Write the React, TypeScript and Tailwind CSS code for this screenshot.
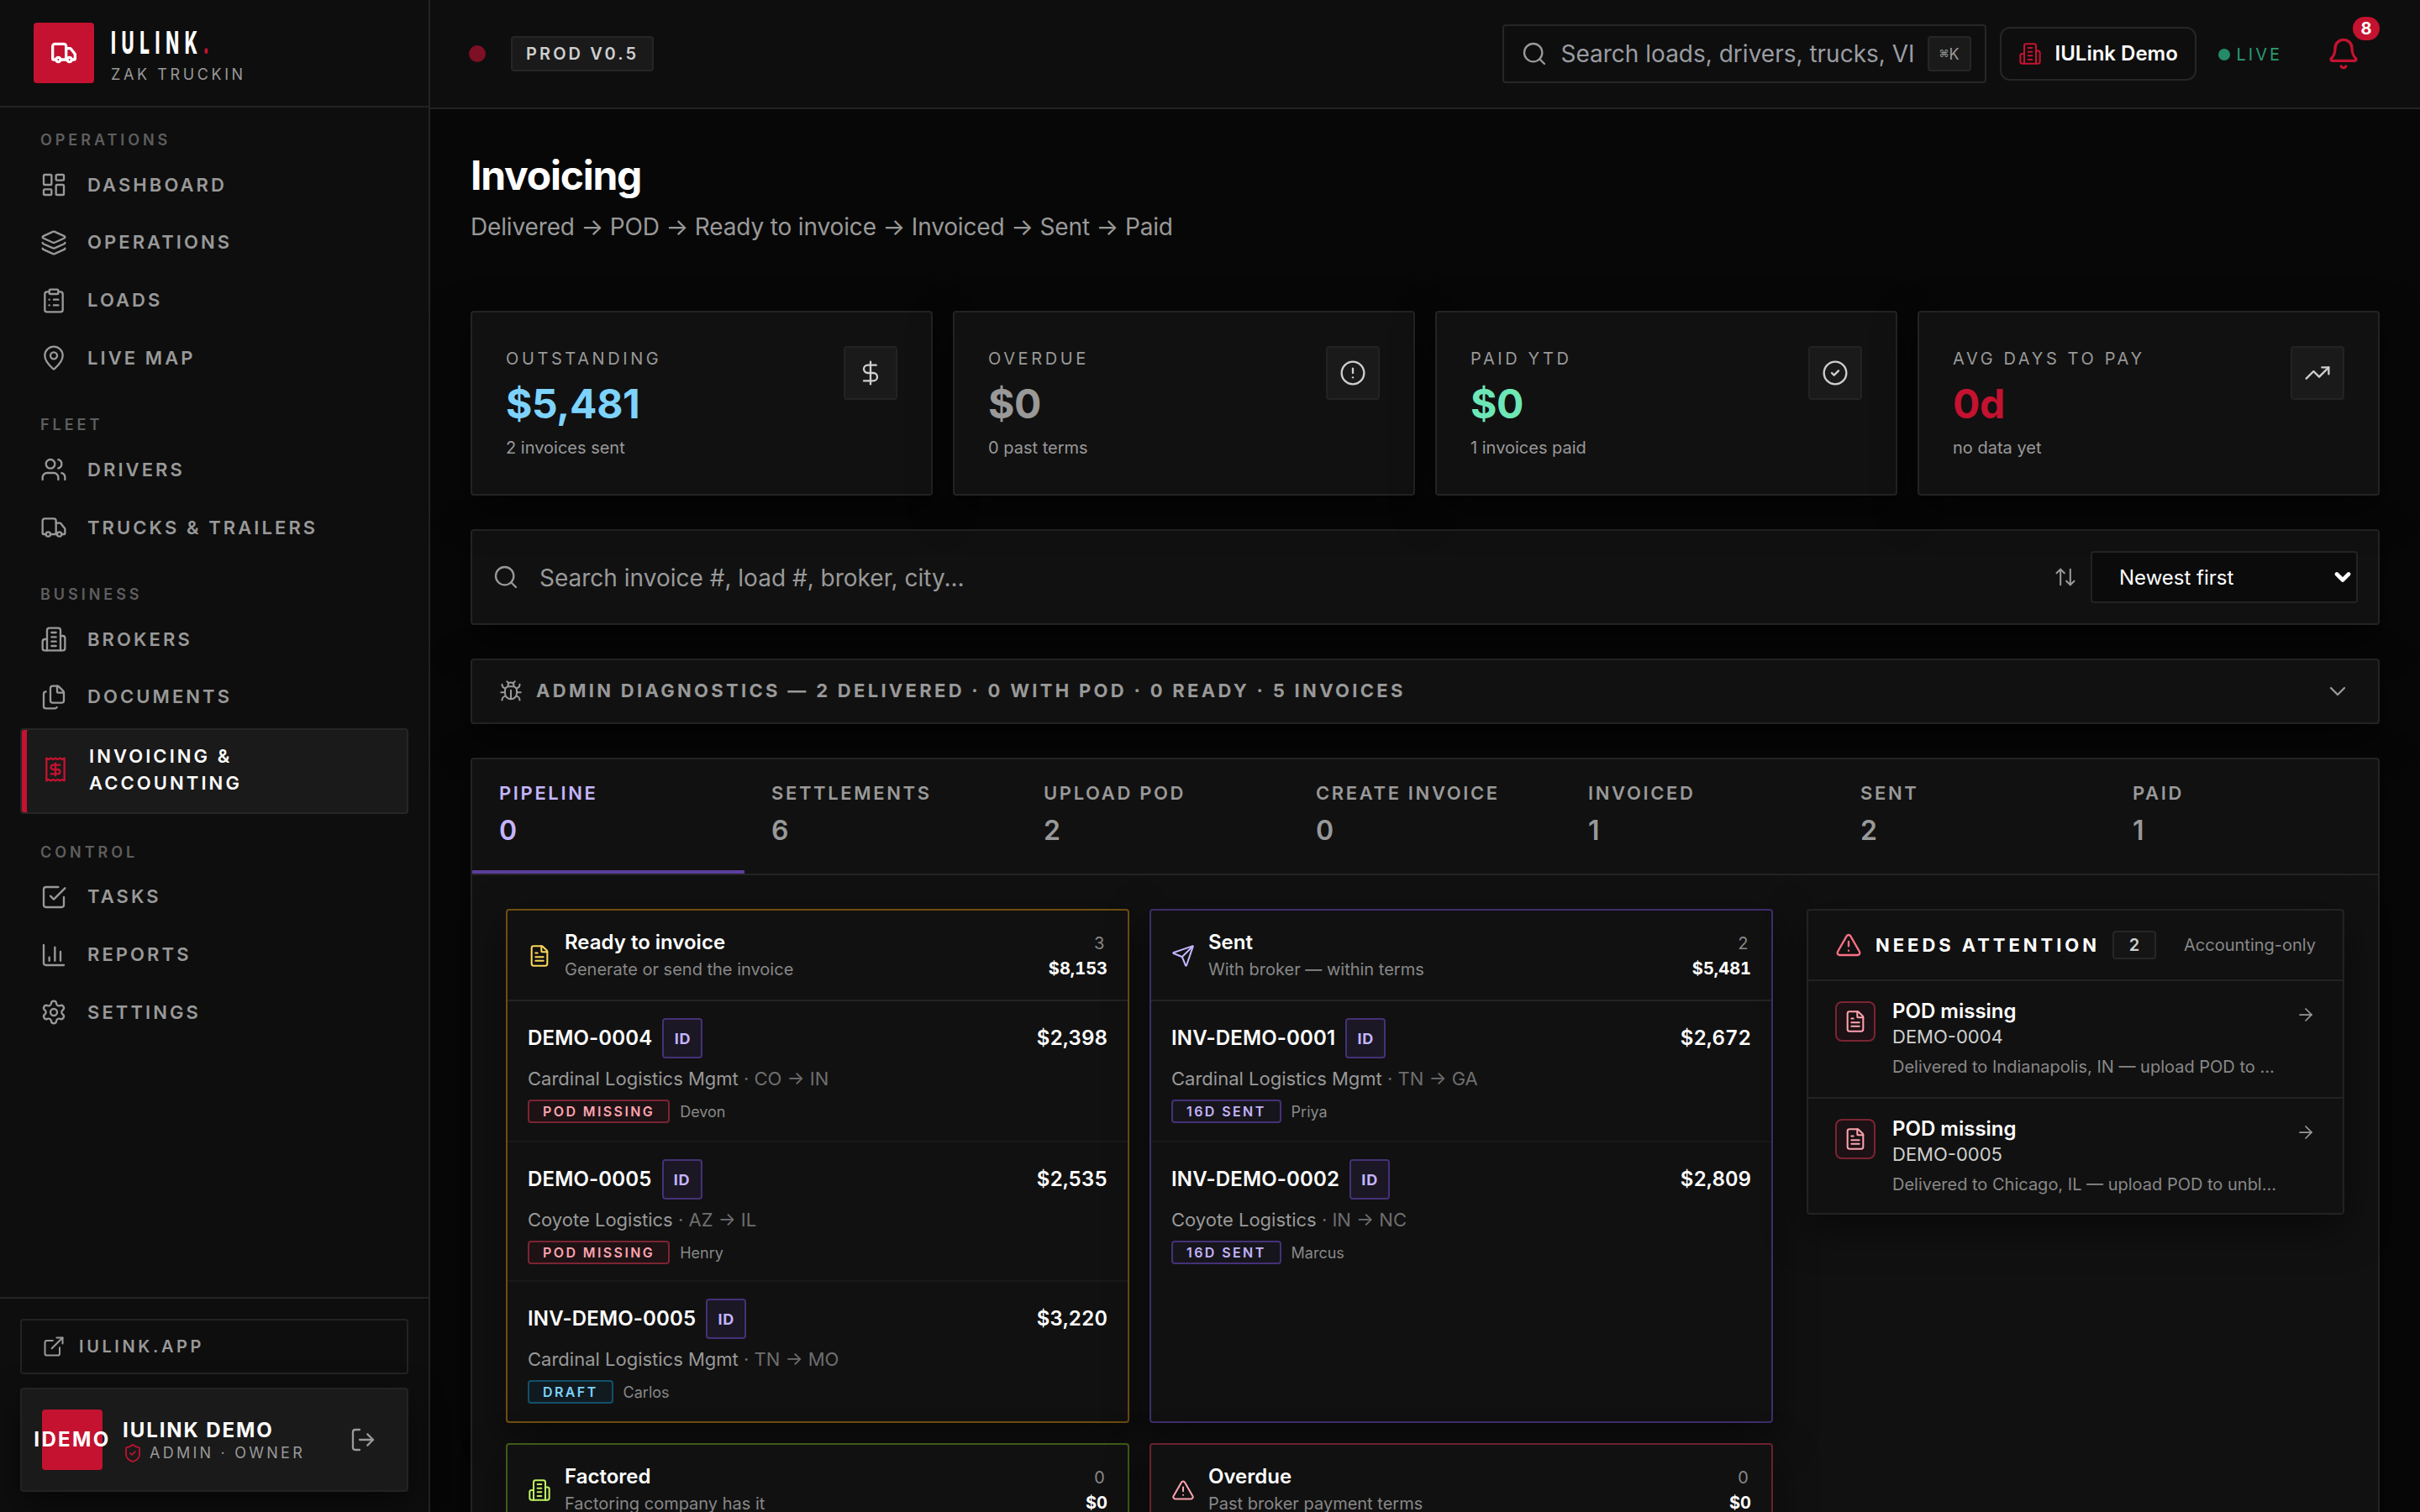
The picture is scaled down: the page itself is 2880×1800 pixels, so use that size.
import type { ReactNode } from 'react';
import {
  ArrowRight,
  ArrowUpDown,
  Bell,
  Bug,
  ChevronDown,
  CircleAlert,
  CircleCheck,
  ClipboardList,
  DollarSign,
  ExternalLink,
  FileText,
  Files,
  Layers,
  LayoutDashboard,
  LogOut,
  MapPin,
  Search,
  Send,
  Settings,
  ShieldCheck,
  TrendingUp,
  TriangleAlert,
  Truck,
  Users,
  type LucideIcon,
} from 'lucide-react';

type IconType = LucideIcon | ((props: { className?: string }) => ReactNode);

const stroke = {
  viewBox: '0 0 24 24',
  fill: 'none',
  stroke: 'currentColor',
  strokeWidth: 2,
  strokeLinecap: 'round' as const,
  strokeLinejoin: 'round' as const,
};

function BrokerIcon({ className }: { className?: string }) {
  return (
    <svg {...stroke} className={className}>
      <path d="M6 22V4a2 2 0 0 1 2-2h8a2 2 0 0 1 2 2v18Z" />
      <path d="M6 12H4a2 2 0 0 0-2 2v6a2 2 0 0 0 2 2h2" />
      <path d="M18 9h2a2 2 0 0 1 2 2v9a2 2 0 0 1-2 2h-2" />
      <path d="M10 6h4M10 10h4M10 14h4M10 18h4" />
    </svg>
  );
}

function TaskIcon({ className }: { className?: string }) {
  return (
    <svg {...stroke} className={className}>
      <path d="m9 11 3 3L22 4" />
      <path d="M21 12v7a2 2 0 0 1-2 2H5a2 2 0 0 1-2-2V5a2 2 0 0 1 2-2h11" />
    </svg>
  );
}

function ReportIcon({ className }: { className?: string }) {
  return (
    <svg {...stroke} className={className}>
      <path d="M3 3v16a2 2 0 0 0 2 2h16M8 17v-3M13 17V5M18 17V9" />
    </svg>
  );
}

function InvoiceIcon({ className }: { className?: string }) {
  return (
    <svg {...stroke} className={className}>
      <path d="M4 2v20l2-1 2 1 2-1 2 1 2-1 2 1 2-1 2 1V2l-2 1-2-1-2 1-2-1-2 1-2-1-2 1Z" />
      <path d="M16 8h-6a2 2 0 1 0 0 4h4a2 2 0 1 1 0 4H8M12 17.5v-11" />
    </svg>
  );
}

type NavItem = { label: string; icon: IconType; active?: boolean };

const nav: { title: string; items: NavItem[] }[] = [
  {
    title: 'Operations',
    items: [
      { label: 'Dashboard', icon: LayoutDashboard },
      { label: 'Operations', icon: Layers },
      { label: 'Loads', icon: ClipboardList },
      { label: 'Live Map', icon: MapPin },
    ],
  },
  {
    title: 'Fleet',
    items: [
      { label: 'Drivers', icon: Users },
      { label: 'Trucks & Trailers', icon: Truck },
    ],
  },
  {
    title: 'Business',
    items: [
      { label: 'Brokers', icon: BrokerIcon },
      { label: 'Documents', icon: Files },
      { label: 'Invoicing & Accounting', icon: InvoiceIcon, active: true },
    ],
  },
  {
    title: 'Control',
    items: [
      { label: 'Tasks', icon: TaskIcon },
      { label: 'Reports', icon: ReportIcon },
      { label: 'Settings', icon: Settings },
    ],
  },
];

const stats = [
  { label: 'Outstanding', value: '$5,481', note: '2 invoices sent', color: 'text-[#7dd3fc]', icon: DollarSign },
  { label: 'Overdue', value: '$0', note: '0 past terms', color: 'text-[#999999]', icon: CircleAlert },
  { label: 'Paid YTD', value: '$0', note: '1 invoices paid', color: 'text-[#6ee7b7]', icon: CircleCheck },
  { label: 'Avg days to pay', value: '0d', note: 'no data yet', color: 'text-[#c41230]', icon: TrendingUp },
];

const tabs = [
  { label: 'Pipeline', count: 0, active: true },
  { label: 'Settlements', count: 6 },
  { label: 'Upload POD', count: 2 },
  { label: 'Create invoice', count: 0 },
  { label: 'Invoiced', count: 1 },
  { label: 'Sent', count: 2 },
  { label: 'Paid', count: 1 },
];

const tones = {
  rose: 'border-[#7a2433] bg-[#1e1215] text-[#fda4af]',
  violet: 'border-[#443177] bg-[#17151c] text-[#c4b5fd]',
  sky: 'border-[#12506c] bg-[#111a1f] text-[#7dd3fc]',
};

type Row = { id: string; amount: string; broker: string; lane: string; badge: string; tone: keyof typeof tones; driver: string };

const columns: { title: string; note: string; count: number; total: string; border: string; color: string; icon: IconType; rows: Row[] }[] = [
  {
    title: 'Ready to invoice',
    note: 'Generate or send the invoice',
    count: 3,
    total: '$8,153',
    border: 'border-[#704d10]',
    color: 'text-[#fcd858]',
    icon: FileText,
    rows: [
      { id: 'DEMO-0004', amount: '$2,398', broker: 'Cardinal Logistics Mgmt', lane: 'CO → IN', badge: 'POD missing', tone: 'rose', driver: 'Devon' },
      { id: 'DEMO-0005', amount: '$2,535', broker: 'Coyote Logistics', lane: 'AZ → IL', badge: 'POD missing', tone: 'rose', driver: 'Henry' },
      { id: 'INV-DEMO-0005', amount: '$3,220', broker: 'Cardinal Logistics Mgmt', lane: 'TN → MO', badge: 'Draft', tone: 'sky', driver: 'Carlos' },
    ],
  },
  {
    title: 'Sent',
    note: 'With broker — within terms',
    count: 2,
    total: '$5,481',
    border: 'border-[#3d2d6b]',
    color: 'text-[#c4b5fd]',
    icon: Send,
    rows: [
      { id: 'INV-DEMO-0001', amount: '$2,672', broker: 'Cardinal Logistics Mgmt', lane: 'TN → GA', badge: '16d sent', tone: 'violet', driver: 'Priya' },
      { id: 'INV-DEMO-0002', amount: '$2,809', broker: 'Coyote Logistics', lane: 'IN → NC', badge: '16d sent', tone: 'violet', driver: 'Marcus' },
    ],
  },
  {
    title: 'Factored',
    note: 'Factoring company has it',
    count: 0,
    total: '$0',
    border: 'border-[#3f5a18]',
    color: 'text-[#bef264]',
    icon: BrokerIcon,
    rows: [],
  },
  {
    title: 'Overdue',
    note: 'Past broker payment terms',
    count: 0,
    total: '$0',
    border: 'border-[#6b212d]',
    color: 'text-[#fda4af]',
    icon: TriangleAlert,
    rows: [],
  },
];

const alerts = [
  { id: 'DEMO-0004', note: 'Delivered to Indianapolis, IN — upload POD to unblock' },
  { id: 'DEMO-0005', note: 'Delivered to Chicago, IL — upload POD to unblock' },
];

function Sidebar() {
  return (
    <aside className="flex w-[512px] shrink-0 flex-col border-r-2 border-[#232323] bg-[#0e0e0e]">
      <div className="flex h-[128px] items-center gap-5 border-b-2 border-[#232323] px-10">
        <div className="flex size-[72px] items-center justify-center rounded bg-[#c41230] text-white">
          <Truck className="size-8 stroke-[2.5]!" />
        </div>
        <div className="flex flex-col pt-[11px]">
          <div className="h-9 w-[130px]">
            <span className="inline-block origin-left scale-x-[0.56] text-[37px] leading-9 font-extrabold tracking-[0.32em] whitespace-nowrap text-white">
              IULINK<span className="text-[#c41230]">.</span>
            </span>
          </div>
          <div className="mt-1 text-[18px] leading-8 tracking-[0.2em] text-[#999999] uppercase">Zak Truckin</div>
        </div>
      </div>

      <nav className="flex grow flex-col px-6 pt-[25px]">
        {nav.map((group) => (
          <div key={group.title} className="mb-[34px] last:-mt-0.5">
            <div className="mb-[7px] h-7 px-6 text-[18px] leading-7 font-semibold tracking-[0.22em] text-[#5e5e5e] uppercase">
              {group.title}
            </div>
            <div className="flex flex-col gap-[4.8px]">
              {group.items.map(({ label, icon: Icon, active }) =>
                active ? (
                  <div
                    key={label}
                    className="flex h-[102px] items-center gap-6 rounded border-2 border-[#262626] bg-[#1a1a1a] pb-[3px] pl-6 text-[22px] leading-8 font-semibold tracking-[0.14em] text-white uppercase shadow-[inset_6px_0_0_#c41230]"
                  >
                    <Icon className="size-8 shrink-0 text-[#c41230]" />
                    <span className="w-[220px]">{label}</span>
                  </div>
                ) : (
                  <div
                    key={label}
                    className="flex h-16 items-center gap-6 px-6 text-[22px] font-semibold tracking-[0.14em] text-[#999999] uppercase"
                  >
                    <Icon className="size-8 shrink-0" />
                    {label}
                  </div>
                ),
              )}
            </div>
          </div>
        ))}
      </nav>

      <div className="flex h-[256px] flex-col gap-4 border-t-2 border-[#232323] px-6 pt-6">
        <div className="flex h-[66px] items-center gap-4 rounded border-2 border-[#232323] px-6 text-[20px] font-semibold tracking-[0.18em] text-[#999999] uppercase">
          <ExternalLink className="size-7" />
          IULink.app
        </div>
        <div className="flex h-[124px] items-center rounded border-2 border-[#232323] bg-[#1a1a1a] px-6 shadow-[0_16px_40px_rgba(0,0,0,0.5)]">
          <div className="flex size-[72px] items-center justify-center rounded bg-[#c41230] text-[24px] font-bold tracking-[0.1em] text-white">
            IDEMO
          </div>
          <div className="ml-6 grow pt-1">
            <div className="text-[24px] leading-7 font-bold tracking-[0.08em] text-white">IULINK DEMO</div>
            <div className="flex items-center gap-2 text-[18px] leading-[26px] tracking-[0.18em] text-[#999999]">
              <ShieldCheck className="size-6 text-[#c41230]" />
              ADMIN · OWNER
            </div>
          </div>
          <LogOut className="mr-3 size-8 text-[#999999]" />
        </div>
      </div>
    </aside>
  );
}

function Topbar() {
  return (
    <header className="flex h-[130px] shrink-0 items-center border-b-2 border-[#232323] bg-[#0e0e0e] pr-[71px] pl-[46px]">
      <div className="size-5 rounded-full bg-[#7d1024]" />
      <div className="ml-[30px] flex h-[42px] items-center rounded border-2 border-[#262626] bg-[#1a1a1a] px-4 text-[20px] font-semibold tracking-[0.155em] text-[#cfcfcf]">
        PROD V0.5
      </div>

      <div className="ml-auto flex h-[70px] w-[576px] items-center rounded border-2 border-[#262626] pr-4 pl-5">
        <Search className="size-8 shrink-0 text-[#999999]" />
        <div className="ml-4 w-[421px] overflow-hidden text-[28px] whitespace-nowrap text-[#9a9ca3]">
          Search loads, drivers, trucks, VIN
        </div>
        <kbd className="ml-auto flex h-[42px] w-[52px] items-center justify-center rounded border-2 border-[#262626] bg-[#1a1a1a] font-[Inter] text-[18px] text-[#999999]">
          <span className="text-[12px]">⌘</span>K
        </kbd>
      </div>
      <div className="ml-4 flex h-16 w-[234px] items-center gap-4 rounded-xl border-2 border-[#262626] pl-5 text-[24px] font-semibold whitespace-nowrap text-white">
        <BrokerIcon className="size-7 text-[#c41230]" />
        IULink Demo
      </div>
      <div className="ml-[26px] flex items-center gap-2 pt-px text-[20px] tracking-[0.15em] text-[#2a9a72]">
        <span className="size-3.5 rounded-full bg-[#268a67]" />
        LIVE
      </div>
      <div className="relative ml-[53px] size-10">
        <Bell className="size-10 stroke-2! text-[#c41230]" />
        <span className="absolute top-[-24px] right-[-23px] flex h-7 w-8 items-center justify-center rounded-full bg-[#c41230] text-[20px] font-bold text-white">
          8
        </span>
      </div>
    </header>
  );
}

function StatCards() {
  return (
    <div className="grid grid-cols-4 gap-6">
      {stats.map(({ label, value, note, color, icon: Icon }) => (
        <div
          key={label}
          className="flex h-[220px] justify-between rounded border-2 border-[#232323] bg-[#111111] p-10 shadow-[0_16px_48px_rgba(0,0,0,0.5)]"
        >
          <div>
            <div className="text-[20px] leading-[30px] tracking-[0.18em] text-[#999999] uppercase">{label}</div>
            <div className={`text-[48px] leading-[77px] font-bold tracking-[-0.007em] ${color}`}>{value}</div>
            <div className="text-[20px] leading-7 text-[#999999]">{note}</div>
          </div>
          <div className="flex size-16 items-center justify-center rounded border-2 border-[#232323] bg-[#1a1a1a] text-[#cfcfcf]">
            <Icon className="size-8" />
          </div>
        </div>
      ))}
    </div>
  );
}

function PipelineCard({ column }: { column: (typeof columns)[number] }) {
  const Icon = column.icon;
  return (
    <section className={`rounded border-2 bg-[#111111] shadow-[0_16px_48px_rgba(0,0,0,0.5)] ${column.border}`}>
      <div className="flex h-[108px] items-center border-b-2 border-[#232323] px-6 pt-0.5">
        <Icon className={`size-7 ${column.color}`} />
        <div className="ml-4 grow">
          <div className="text-[24px] leading-[33px] font-semibold text-white">{column.title}</div>
          <div className="text-[20px] leading-[33px] text-[#888888]">{column.note}</div>
        </div>
        <div className="text-right text-[20px] leading-[30px] tabular-nums">
          <div className="pr-[3px] text-[#888888]">{column.count}</div>
          <div className="font-bold text-white">{column.total}</div>
        </div>
      </div>
      {column.rows.map((row) => (
        <div key={row.id} className="h-[166px] border-b-2 border-[#1a1a1a] px-6 pt-5 nth-2:h-[168px] last:border-b-0">
          <div className="flex h-12 items-center text-[24px] font-semibold tracking-[0.006em] text-white">
            {row.id}
            <span className="ml-3 flex size-12 items-center justify-center rounded border-2 border-[#443177] bg-[#1b1724] text-[18px] font-bold tracking-[0.04em] text-[#c4b5fd]">
              ID
            </span>
            <span className="ml-auto tracking-normal tabular-nums">{row.amount}</span>
          </div>
          <div className="mt-2 text-[22px] leading-[33px] text-[#999999]">
            {row.broker} <span className="text-[#6e6e6e]">· {row.lane}</span>
          </div>
          <div className="mt-2 flex h-7 items-center gap-3">
            <span
              className={`flex h-7 items-center rounded border-2 px-4 text-[16px] font-semibold tracking-[0.15em] uppercase ${tones[row.tone]}`}
            >
              {row.badge}
            </span>
            <span className="text-[18px] text-[#888888]">{row.driver}</span>
          </div>
        </div>
      ))}
    </section>
  );
}

function NeedsAttention() {
  return (
    <aside className="self-start rounded border-2 border-[#232323] bg-[#111111] shadow-[0_16px_48px_rgba(0,0,0,0.5)]">
      <div className="flex h-[84px] items-center border-b-2 border-[#232323] px-8">
        <TriangleAlert className="size-8 text-[#fb7185]" />
        <h2 className="ml-4 text-[22px] font-bold tracking-[0.18em] whitespace-nowrap text-white">NEEDS ATTENTION</h2>
        <span className="ml-[15px] flex h-[34px] w-[52px] items-center justify-center rounded border-2 border-[#262626] bg-[#151515] text-[20px] font-semibold text-[#cfcfcf]">
          2
        </span>
        <span className="ml-auto text-[20px] text-[#888888]">Accounting-only</span>
      </div>
      {alerts.map((alert) => (
        <div key={alert.id} className="flex h-[140px] border-b-2 border-[#232323] px-8 pt-6 last:h-[136px] last:border-b-0">
          <div className="flex size-12 shrink-0 items-center justify-center rounded-lg border-2 border-[#7a2433] bg-[#1c1114] text-[#fda4af]">
            <FileText className="size-7" />
          </div>
          <div className="ml-5 w-[460px]">
            <div className="text-[24px] leading-6 font-semibold text-white">POD missing</div>
            <div className="text-[22px] leading-9 text-[#cfcfcf]">{alert.id}</div>
            <div className="truncate text-[20px] leading-[37px] text-[#888888]">{alert.note}</div>
          </div>
          <ArrowRight className="mt-1 ml-auto size-6 text-[#999999]" />
        </div>
      ))}
    </aside>
  );
}

export default function App() {
  return (
    <div className="flex h-[1800px] w-[2880px] overflow-hidden bg-[#070707] font-[Inter,sans-serif] [&_svg]:stroke-[1.75]">
      <Sidebar />
      <div className="flex min-w-0 grow flex-col">
        <Topbar />
        <main className="grow px-12 pt-12">
          <h1 className="text-[48px] leading-[62px] font-bold tracking-[-0.026em] text-white">Invoicing</h1>
          <p className="mt-2 h-[122px] text-[28px] leading-[44px] tracking-[-0.0054em] text-[#999999]">
            Delivered → POD → Ready to invoice → Invoiced → Sent → Paid
          </p>

          <StatCards />

          {/* Search and sort */}
          <div className="mt-10 flex h-[114px] items-center rounded border-2 border-[#232323] bg-[#111111] px-6 shadow-[0_16px_48px_rgba(0,0,0,0.5)]">
            <Search className="size-8 text-[#999999]" />
            <span className="ml-6 pt-0.5 text-[28px] text-[#999999]">Search invoice #, load #, broker, city...</span>
            <ArrowUpDown className="mr-4 ml-auto size-7 text-[#999999]" />
            <div className="flex h-[62px] w-[318px] items-center justify-between rounded border-2 border-[#232323] bg-[#0b0b0b] pr-0.5 pl-8 text-[24px] text-white">
              <span className="pt-0.5">Newest first</span>
              <ChevronDown className="size-7 stroke-4!" />
            </div>
          </div>

          {/* Diagnostics */}
          <div className="mt-10 flex h-[78px] items-center rounded border-2 border-[#232323] bg-[#111111] px-8 text-[#999999] shadow-[0_16px_48px_rgba(0,0,0,0.5)]">
            <Bug className="size-7" />
            <span className="ml-4 pb-0.5 text-[22px] font-bold tracking-[0.15em]">
              ADMIN DIAGNOSTICS — 2 DELIVERED · 0 WITH POD · 0 READY · 5 INVOICES
            </span>
            <ChevronDown className="ml-auto size-8" />
          </div>

          {/* Pipeline panel */}
          <div className="mt-10 h-[1200px] rounded border-2 border-[#232323] bg-[#111111] shadow-[0_16px_48px_rgba(0,0,0,0.5)]">
            <div className="grid grid-cols-7 border-b-2 border-[#232323]">
              {tabs.map((tab) => (
                <div
                  key={tab.label}
                  className={
                    tab.active
                      ? 'h-[136px] border-b-4 border-[#5b3f9e] px-8 pt-6 text-[#c4b5fd]'
                      : 'h-[136px] px-8 pt-6 text-[#999999]'
                  }
                >
                  <div className="text-[22px] leading-8 font-semibold tracking-[0.12em] whitespace-nowrap uppercase">{tab.label}</div>
                  <div className="mt-[9px] text-[32px] leading-10 font-semibold">{tab.count}</div>
                </div>
              ))}
            </div>
            <div className="grid grid-cols-[1508px_640px] gap-10 p-10">
              <div className="grid grid-cols-2 gap-6">
                {columns.map((column) => (
                  <PipelineCard key={column.title} column={column} />
                ))}
              </div>
              <NeedsAttention />
            </div>
          </div>
        </main>
      </div>
    </div>
  );
}
